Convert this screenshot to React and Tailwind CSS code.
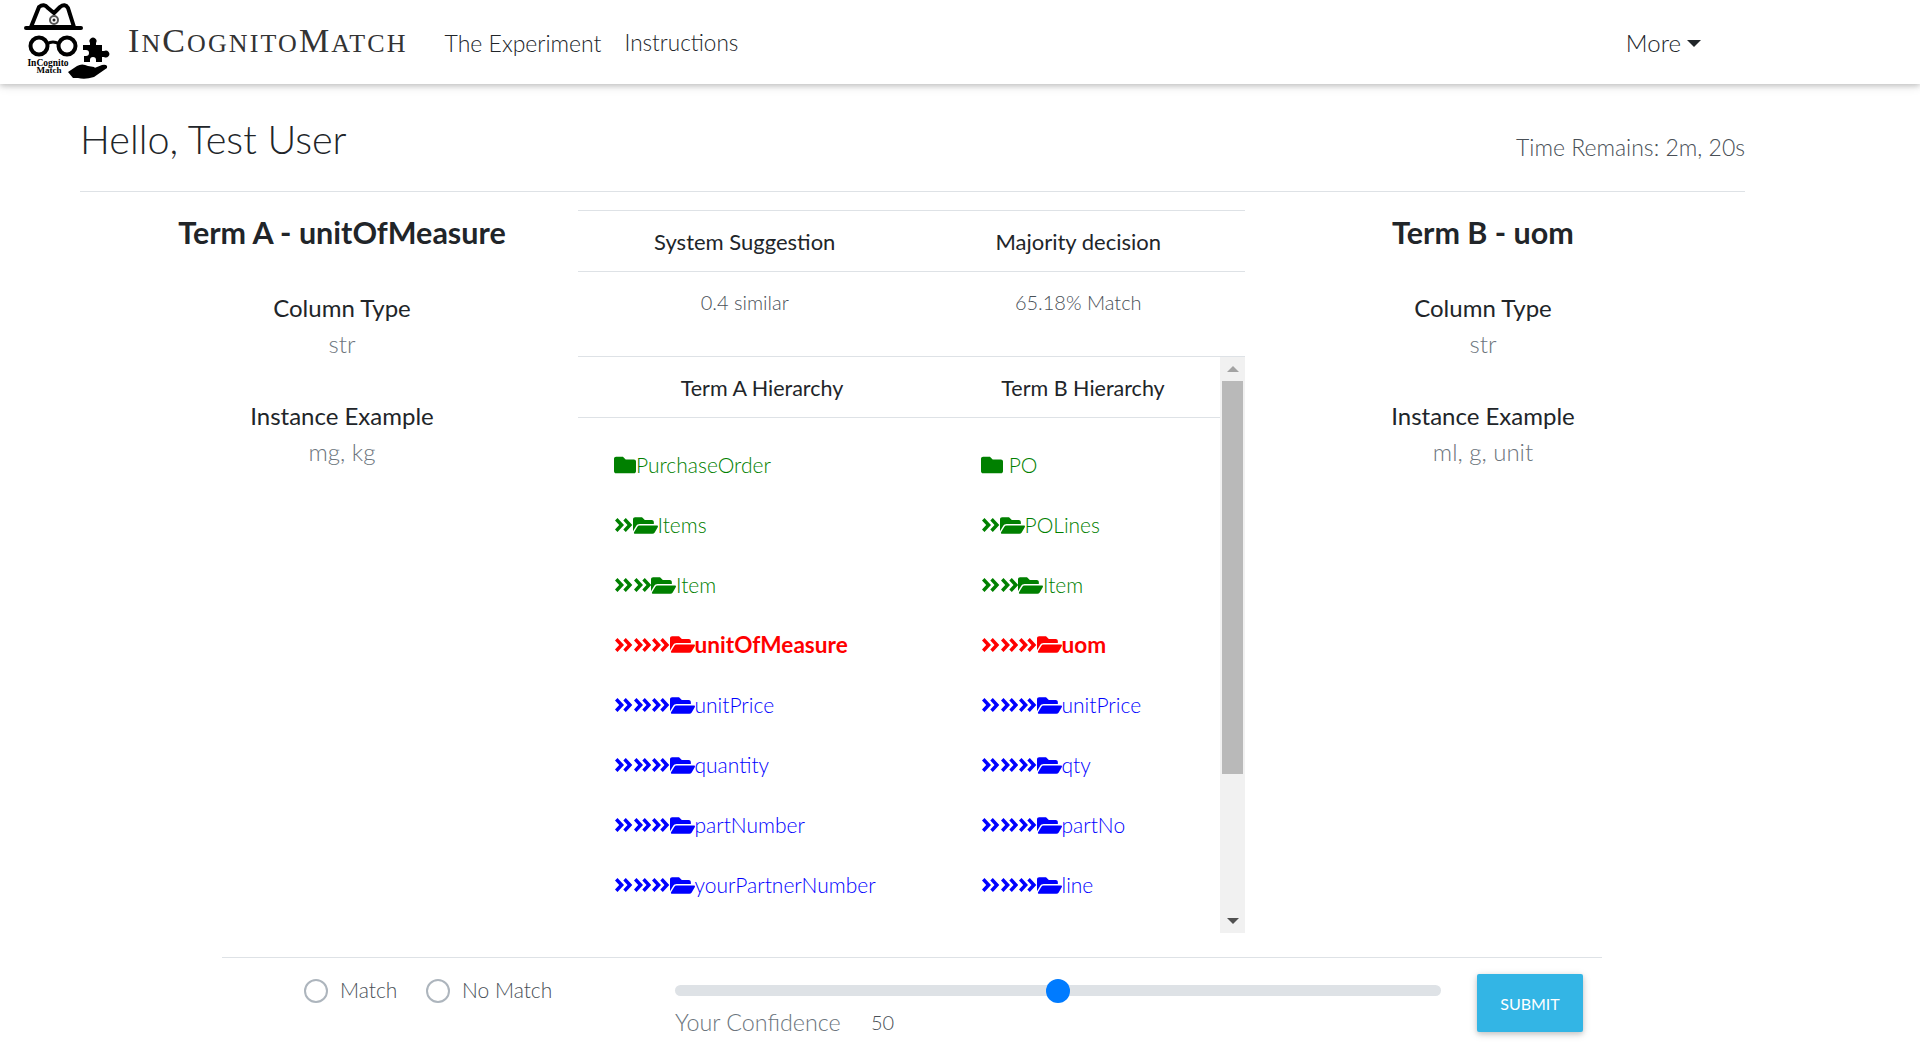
import React from 'react';
import { FaFolder, FaFolderOpen } from 'react-icons/fa';

const Logo = () => (
    <svg width="92" height="80" viewBox="0 0 92 80" className="shrink-0">
        {/* hat */}
        <path d="M11 25 L19 5 Q24 1 28 6 L34 11 L40 5 Q45 1 48 6 L54 25 Z" fill="none" stroke="#000" strokeWidth="4" strokeLinejoin="round" />
        <rect x="4" y="24" width="59" height="4" rx="2" fill="#000" />
        <circle cx="34" cy="18" r="4" fill="none" stroke="#555" strokeWidth="2" />
        <circle cx="34" cy="18" r="1.5" fill="#222" />
        {/* glasses */}
        <circle cx="19" cy="44" r="8.5" fill="none" stroke="#000" strokeWidth="4" />
        <circle cx="47" cy="44" r="8.5" fill="none" stroke="#000" strokeWidth="4" />
        <path d="M27 42 Q33 38 39 42" fill="none" stroke="#000" strokeWidth="3" />
        <text x="28" y="64" textAnchor="middle" fontSize="9.5" fontWeight="700" fontFamily="'Liberation Serif', serif">InCognito</text>
        <text x="29" y="71" textAnchor="middle" fontSize="9" fontWeight="700" fontFamily="'Liberation Serif', serif">Match</text>
        {/* puzzle piece */}
        <path d="M63 43 H70 V41 A3.5 3.5 0 1 1 76 41 V43 H82 V49 H84 A3.5 3.5 0 1 1 84 55 H82 V60 H76 V58 A3 3 0 1 0 70 58 V60 H64 V54 H66 A3 3 0 1 0 66 48 H63 Z" fill="#000" />
        {/* hand */}
        <path d="M48 70 L57 64 Q62 61 68 64 L74 65 Q77 67 73 69 L67 69 L82 63 Q88 62 87 66 L74 75 Q65 78 58 76 L53 76 Z" fill="#000" />
    </svg>
);

const NavBar = () => (
    <nav className="flex items-center h-[84px] pl-[20px] pr-[219px] bg-white shadow-[0_2px_5px_0_rgba(0,0,0,0.16),0_2px_10px_0_rgba(0,0,0,0.12)] text-[#212529]">
        <Logo />
        <span className="ml-[16px] mb-[3px] text-[26px] leading-none uppercase font-['Liberation_Serif',serif] tracking-[2.1px] text-[#333]">
            <span className="text-[34px]">I</span>n<span className="text-[34px]">C</span>ognito<span className="text-[34px]">M</span>atch
        </span>
        <a className="ml-[37px] mt-[2px] text-[23px]">The Experiment</a>
        <a className="ml-[23px] mt-[2px] text-[22.5px]">Instructions</a>
        <a className="ml-auto mt-[2px] flex items-center gap-[6px] text-[24px]">
            More
            <span className="w-0 h-0 border-x-[7px] border-x-transparent border-t-[7px] border-t-[#212529]"></span>
        </a>
    </nav>
);

const TermPanel = ({ title, instance, className }) => (
    <div className={`flex flex-col items-center text-center ${className}`}>
        <h2 className="mt-[18px] h-[44px] leading-[44px] text-[30.5px] font-bold text-[#212529]">{title}</h2>
        <div className="mt-[36px] h-[36px] leading-[36px] text-[24px] font-normal text-[#212529]">Column Type</div>
        <div className="h-[36px] leading-[36px] text-[24px] text-[#6c757d]">str</div>
        <div className="mt-[36px] h-[36px] leading-[36px] text-[24px] font-normal text-[#212529]">Instance Example</div>
        <div className="h-[36px] leading-[36px] text-[24px] text-[#6c757d]">{instance}</div>
    </div>
);

// two thick chevrons, same stride as the reference's double angle glyph
const Chevrons = () => (
    <svg width="18.5" height="14" viewBox="0 0 18.5 14" fill="currentColor" className="shrink-0">
        <path d="M1 2.5 L3.5 0 L10 7 L3.5 14 L1 11.5 L5.2 7 Z" />
        <path d="M9.3 2.5 L11.8 0 L18.3 7 L11.8 14 L9.3 11.5 L13.5 7 Z" />
    </svg>
);

const HierarchyLabel = ({ depth, name, color, bold, width }) => (
    <div className={`flex items-center ${width}`} style={{ color }}>
        {Array.from({ length: depth }).map((_, i) => (
            <Chevrons key={i} />
        ))}
        {depth === 0 ? <FaFolder size={22} className="shrink-0" /> : <FaFolderOpen size={25} className="shrink-0" />}
        <span className={bold ? 'font-bold text-[22.6px]' : 'text-[21px]'}>{name}</span>
    </div>
);

const rows = [
    { a: 'PurchaseOrder', b: '\u00a0PO', depth: 0, color: '#008000' },
    { a: 'Items', b: 'POLines', depth: 1, color: '#008000' },
    { a: 'Item', b: 'Item', depth: 2, color: '#008000' },
    { a: 'unitOfMeasure', b: 'uom', depth: 3, color: '#ff0000', bold: true },
    { a: 'unitPrice', b: 'unitPrice', depth: 3, color: '#0000ff' },
    { a: 'quantity', b: 'qty', depth: 3, color: '#0000ff' },
    { a: 'partNumber', b: 'partNo', depth: 3, color: '#0000ff' },
    { a: 'yourPartnerNumber', b: 'line', depth: 3, color: '#0000ff' },
];

const ScrollBar = () => (
    <div className="flex flex-col items-center w-[25px] h-full bg-[#f1f1f1]">
        <div className="flex items-center justify-center h-[24px] w-full">
            <span className="w-0 h-0 border-x-[6px] border-x-transparent border-b-[6px] border-b-[#a3a3a3]"></span>
        </div>
        <div className="w-[21px] h-[393px] bg-[#b9b9b9]"></div>
        <div className="flex items-end justify-center flex-1 w-full pb-[9px]">
            <span className="w-0 h-0 border-x-[6px] border-x-transparent border-t-[6px] border-t-[#505050]"></span>
        </div>
    </div>
);

const CenterPanel = () => (
    <div className="w-[667px] shrink-0 mt-[18px] text-center">
        <div className="grid grid-cols-2 h-[62px] items-center border-t border-b border-[#dee2e6] text-[22px] font-normal text-[#212529]">
            <div>System Suggestion</div>
            <div>Majority decision</div>
        </div>
        <div className="grid grid-cols-2 h-[85px] pt-[14px] border-b border-[#dee2e6] text-[20px] leading-[32px] text-[#495057]">
            <div>0.4 similar</div>
            <div>65.18% Match</div>
        </div>
        <div className="flex h-[576px]">
            <div className="flex-1">
                <div className="flex h-[61px] pt-[2px] items-center border-b border-[#dee2e6] text-[21.5px] font-normal text-[#212529]">
                    <div className="w-[368px] text-center">Term A Hierarchy</div>
                    <div className="flex-1 text-center">Term B Hierarchy</div>
                </div>
                <div className="flex flex-col pt-[17px] pl-[36px]">
                    {rows.map((row) => (
                        <div key={row.a} className="flex items-center h-[60px]">
                            <HierarchyLabel depth={row.depth} name={row.a} color={row.color} bold={row.bold} width="w-[367px]" />
                            <HierarchyLabel depth={row.depth} name={row.b} color={row.color} bold={row.bold} />
                        </div>
                    ))}
                </div>
            </div>
            <ScrollBar />
        </div>
    </div>
);

const Footer = () => (
    <div className="flex ml-[222px] mr-[318px] mt-[24px] pt-[16px] h-[99px] border-t border-[#dee2e6]">
        <div className="flex items-start pl-[82px] w-[453px] text-[21px] text-[#495057]">
            <span className="mt-[5px] w-[24px] h-[24px] rounded-full border-2 border-[#adb5bd]"></span>
            <span className="ml-[12px] w-[74px]">Match</span>
            <span className="ml-[12px] mt-[5px] w-[24px] h-[24px] rounded-full border-2 border-[#adb5bd]"></span>
            <span className="ml-[12px]">No Match</span>
        </div>
        <div className="w-[766px] shrink-0">
            <div className="relative mt-[11px] h-[11px] rounded-full bg-[#dee2e6]">
                <span className="absolute left-[371px] top-[-6px] w-[24px] h-[24px] rounded-full bg-[#007bff]"></span>
            </div>
            <div className="flex items-center mt-[9px] text-[23.3px] text-[#6c757d]">
                <span className="w-[196px]">Your Confidence</span>
                <span className="text-[#495057] text-[20px]">50</span>
            </div>
        </div>
        <button className="ml-[36px] w-[106px] h-[58px] pt-[1px] bg-[#33b5e5] text-white text-[16px] font-normal rounded-[2px] shadow-[0_2px_5px_0_rgba(0,0,0,0.16),0_2px_10px_0_rgba(0,0,0,0.12)]">SUBMIT</button>
    </div>
);

const App = () => {
    return (
        <div className="h-[1056px] overflow-hidden bg-white font-['Lato',sans-serif] font-light">
            <NavBar />
            <div className="pl-[80px] pr-[175px]">
                <div className="flex justify-between h-[108px] border-b border-[#dee2e6] text-[#212529]">
                    <h1 className="mt-[28px] text-[39.6px] leading-[54px]">Hello, Test User</h1>
                    <div className="mt-[45px] text-[23px] leading-[36px] text-[#495057]">Time Remains: 2m, 20s</div>
                </div>
                <div className="flex">
                    <TermPanel title="Term A - unitOfMeasure" instance="mg, kg" className="w-[498px] pl-[26px]" />
                    <CenterPanel />
                    <TermPanel title="Term B - uom" instance="ml, g, unit" className="flex-1 pr-[24px]" />
                </div>
            </div>
            <Footer />
        </div>
    );
};

export default App;
